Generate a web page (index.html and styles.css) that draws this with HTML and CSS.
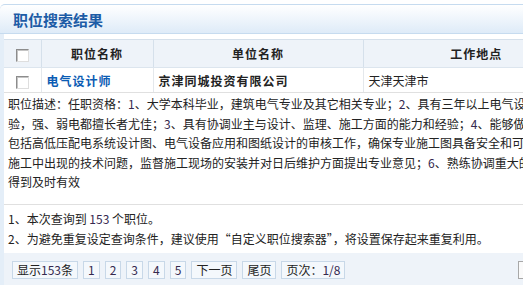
FILE: index.html
```html
<!DOCTYPE html>
<html lang="zh-CN">
<head>
  <meta charset="UTF-8" />
  <title>职位搜索结果</title>
  <link rel="stylesheet" href="styles.css">
</head>
<body>
<div class="page">
  <!-- Title bar -->
  <div class="title-bar">
    <h2>职位搜索结果</h2>
  </div>

  <div class="content">
    <!-- Result table -->
    <table class="result">
      <colgroup>
        <col class="col-check">
        <col class="col-name">
        <col class="col-company">
        <col>
      </colgroup>
      <tr>
        <th><input type="checkbox" class="chk"></th>
        <th>职位名称</th>
        <th>单位名称</th>
        <th>工作地点</th>
      </tr>
      <tr>
        <td class="center"><input type="checkbox" class="chk"></td>
        <td><a href="#" class="job-link">电气设计师</a></td>
        <td class="company">京津同城投资有限公司</td>
        <td>天津天津市</td>
      </tr>
    </table>

    <!-- Job description -->
    <div class="desc">
      职位描述：任职资格：<span class="num">1</span>、大学本科毕业，建筑电气专业及其它相关专业；<span class="num">2</span>、具有三年以上电气设计工作经<br>
      验，强、弱电都擅长者尤佳；<span class="num">3</span>、具有协调业主与设计、监理、施工方面的能力和经验；<span class="num">4</span>、能够做好专业设计管理，<br>
      包括高低压配电系统设计图、电气设备应用和图纸设计的审核工作，确保专业施工图具备安全和可行性；<br>
      施工中出现的技术问题，监督施工现场的安装并对日后维护方面提出专业意见；<span class="num">6</span>、熟练协调重大的问题，使之<br>
      得到及时有效
    </div>

    <!-- Tips -->
    <div class="tips">
      <p>1、本次查询到 <span class="num">153</span> 个职位。</p>
      <p>2、为避免重复设定查询条件，建议使用“自定义职位搜索器”，将设置保存起来重复利用。</p>
    </div>

    <!-- Pager -->
    <div class="pager">
      <a href="#">显示<span class="num">153</span>条</a>
      <a href="#"><span class="num">1</span></a>
      <a href="#"><span class="num">2</span></a>
      <a href="#"><span class="num">3</span></a>
      <a href="#"><span class="num">4</span></a>
      <a href="#"><span class="num">5</span></a>
      <a href="#">下一页</a>
      <a href="#">尾页</a>
      <a href="#">页次：<span class="num">1/8</span></a>
      <span class="jump"></span>
    </div>
  </div>
</div>
</body>
</html>
```

FILE: styles.css
```css
html, body {
  margin: 0;
  overflow: hidden;
  background: #fff;
}
body {
  font-family: "Noto Sans CJK SC", sans-serif;
  font-size: 12px;
  color: #222;
}

.page {
  width: 590px;
}

/* Title bar */
.title-bar {
  margin-top: 4px;
  height: 28px;
  padding-left: 13px;
  display: flex;
  align-items: center;
  border-top: 1px solid #c6dbef;
  border-bottom: 1px solid #c6dbef;
  border-top-left-radius: 5px;
  background: linear-gradient(#ffffff, #deebf8);
}
.title-bar h2 {
  margin: 0;
  font-size: 15px;
  font-weight: bold;
  color: #1d5ca6;
}

/* Content frame */
.content {
  border-left: 4px solid #e4eef8;
  padding-top: 5px;
}

/* Result table */
.result {
  width: 100%;
  border-collapse: collapse;
}
.col-check { width: 37px; }
.col-name { width: 112px; }
.col-company { width: 210px; }
.result th {
  height: 27px;
  padding: 0;
  background: #eef3f9;
  border-top: 1px solid #d5e0eb;
  border-right: 1px solid #d5e0eb;
  border-bottom: 1px solid #dce5ee;
  font-weight: bold;
  letter-spacing: 1px;
  text-align: center;
}
.result td {
  height: 24px;
  padding: 0 5px;
  border-right: 1px solid #e4e8ec;
  border-bottom: 1px solid #e0e0e0;
}
.result td.center {
  padding: 0;
  text-align: center;
}
.company {
  font-weight: bold;
  letter-spacing: 1px;
}
.job-link {
  color: #0b5cb4;
  font-weight: bold;
  letter-spacing: 1px;
  text-decoration: none;
}

.chk {
  appearance: none;
  width: 13px;
  height: 13px;
  margin: 0;
  vertical-align: middle;
  background: #fff;
  border: 1px solid;
  border-color: #8c8c8c #dedede #dedede #8c8c8c;
  box-shadow: inset 1px 1px 0 #c4c4c4;
}

.num {
  color: #35294f;
}

/* Description */
.desc {
  padding: 1px 4px 12px;
  line-height: 19.5px;
  white-space: nowrap;
  border-bottom: 1px solid #e0e0e0;
}

/* Tips */
.tips {
  padding: 4px 4px;
  line-height: 20px;
}
.tips p {
  margin: 0;
}

/* Pager */
.pager {
  display: flex;
  align-items: center;
  gap: 5px;
  padding: 8px 8px 20px;
  background: #eef3f9;
}
.pager a {
  height: 16px;
  line-height: 16px;
  padding: 0 4px;
  border: 1px solid #c8d8e8;
  background: #f4f8fc;
  color: #222;
  text-decoration: none;
}
.pager .jump {
  margin-left: auto;
  width: 62px;
  height: 16px;
  border: 1px solid #a8a8a8;
  background: #fafafa;
}
```
